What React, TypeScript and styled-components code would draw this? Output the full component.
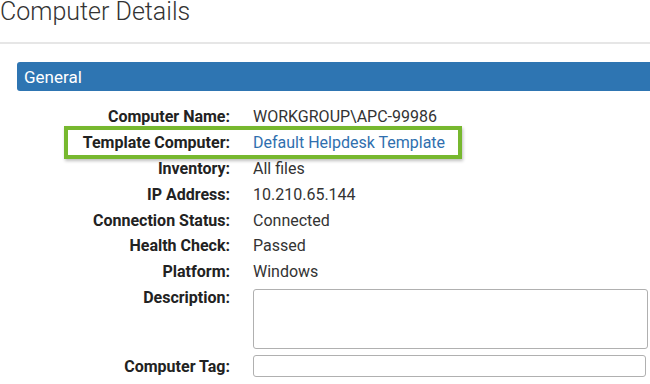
import React from 'react';
import styled, { createGlobalStyle } from 'styled-components';

const GlobalStyle = createGlobalStyle`
  html, body {
    margin: 0;
    padding: 0;
    background: #ffffff;
    overflow: hidden;
  }
  body {
    font-family: Roboto, 'Liberation Sans', Arial, sans-serif;
  }
`;

const Page = styled.div`
  width: 650px;
  height: 384px;
  overflow: hidden;
`;

const Title = styled.h1`
  margin: 0;
  font-size: 25px;
  line-height: 24px;
  font-weight: 300;
  color: #333333;
`;

const Divider = styled.div`
  margin-top: 18px;
  height: 2px;
  background: #e6e6e6;
`;

const Section = styled.section`
  margin: 18px -10px 0 17px;
`;

const SectionHeader = styled.div`
  height: 29px;
  padding-left: 7px;
  display: flex;
  align-items: center;
  background: #2e75b2;
  border-radius: 3px;
  color: #ffffff;
  font-size: 17px;
  font-weight: 400;
`;

const Form = styled.div`
  display: grid;
  grid-template-columns: 213px 395px;
  column-gap: 23px;
  margin-top: 13px;
`;

const Label = styled.div<{ $top?: boolean }>`
  height: 25.8px;
  display: flex;
  align-items: center;
  justify-content: flex-end;
  align-self: ${(p) => (p.$top ? 'start' : 'center')};
  font-size: 16px;
  font-weight: 700;
  color: #222222;
  white-space: nowrap;
`;

const Value = styled.div<{ $link?: boolean }>`
  height: 25.8px;
  display: flex;
  align-items: center;
  font-size: 16px;
  color: ${(p) => (p.$link ? '#2f6fae' : '#333333')};
  white-space: nowrap;
`;

const HighlightRow = styled.div`
  display: contents;
`;

const HighlightBox = styled.div`
  position: relative;
  &::after {
    content: '';
    position: absolute;
    left: -189px;
    top: -4px;
    width: 398px;
    height: 33px;
    box-sizing: border-box;
    border: 4.5px solid #77b82f;
    box-shadow: 1px 2px 3px rgba(0, 0, 0, 0.25);
    pointer-events: none;
  }
`;

const TextArea = styled.textarea`
  box-sizing: border-box;
  margin-top: 4px;
  width: 395px;
  height: 60px;
  border: 1.5px solid #b0b0b0;
  border-radius: 3px;
  resize: none;
  padding: 4px;
  font-family: inherit;
  display: block;
`;

const TextInput = styled.input`
  box-sizing: border-box;
  width: 393px;
  height: 22px;
  border: 1.5px solid #b0b0b0;
  border-radius: 3px;
  padding: 2px 4px;
  font-family: inherit;
`;

const TagLabel = styled(Label)`
  margin-top: 5px;
`;

const TagField = styled.div`
  margin-top: 5px;
  height: 25.8px;
  display: flex;
  align-items: center;
`;

const rows: { label: string; value: string }[] = [
  { label: 'Inventory:', value: 'All files' },
  { label: 'IP Address:', value: '10.210.65.144' },
  { label: 'Connection Status:', value: 'Connected' },
  { label: 'Health Check:', value: 'Passed' },
  { label: 'Platform:', value: 'Windows' },
];

const App: React.FC = () => {
  return (
    <Page>
      <GlobalStyle />
      <Title>Computer Details</Title>
      <Divider />
      <Section>
        <SectionHeader>General</SectionHeader>
        <Form>
          <Label>Computer Name:</Label>
          <Value>WORKGROUP\APC-99986</Value>
          <HighlightRow>
            <Label>Template Computer:</Label>
            <HighlightBox>
              <Value $link>Default Helpdesk Template</Value>
            </HighlightBox>
          </HighlightRow>
          {rows.map((row) => (
            <React.Fragment key={row.label}>
              <Label>{row.label}</Label>
              <Value>{row.value}</Value>
            </React.Fragment>
          ))}
          <Label $top>Description:</Label>
          <div>
            <TextArea />
          </div>
          <TagLabel>Computer Tag:</TagLabel>
          <TagField>
            <TextInput />
          </TagField>
        </Form>
      </Section>
    </Page>
  );
};

export default App;
